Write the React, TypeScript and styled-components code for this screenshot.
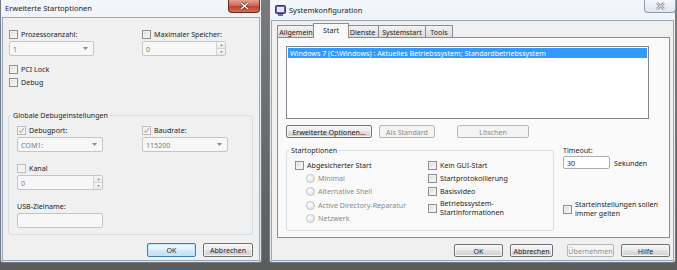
import React, { FC, ReactNode } from 'react';
import styled, { createGlobalStyle, css } from 'styled-components';

const GlobalStyle = createGlobalStyle`
  html, body {
    margin: 0;
    padding: 0;
  }
  body {
    background: #6a6a6a;
    font-family: "Noto Sans", "Open Sans", sans-serif;
    font-size: 7.1px;
    color: #1e1e1e;
  }
`

const Desktop = styled.div`
  display: flex;
  gap: 7px;
  width: 677px;
  height: 270px;
  overflow: hidden;
  background: linear-gradient(#7a7a7a, #5c5c5c);
`

const Window = styled.div<{ $width: number }>`
  flex: none;
  width: ${p => p.$width}px;
  height: 263px;
  box-sizing: border-box;
  display: flex;
  flex-direction: column;
  padding: 0 1px 1px;
  border: 1px solid #6f7b8a;
  border-top: none;
  border-radius: 0 0 3px 3px;
  background: linear-gradient(#f3f7fc, #e6edf6 60px, #dfe7f1);
`

const TitleBar = styled.div<{ $height: number }>`
  flex: none;
  height: ${p => p.$height}px;
  display: flex;
  align-items: flex-start;
  gap: 3px;
`

const TitleIcon = styled.svg`
  margin: 5px 0 0 4px;
`

const TitleText = styled.div<{ $top: number; $left?: number }>`
  flex: 1;
  margin-top: ${p => p.$top}px;
  padding-left: ${p => p.$left ?? 0}px;
  line-height: 10px;
  font-size: 7.5px;
  color: #1b1b1b;
  white-space: nowrap;
`

const CloseButton = styled.div<{ $active?: boolean }>`
  width: 32px;
  height: 13px;
  box-sizing: border-box;
  display: flex;
  align-items: center;
  justify-content: center;
  border: 1px solid #8d9aab;
  border-top: none;
  border-radius: 0 0 4px 4px;
  background: linear-gradient(#f4f7fb, #dde5ef);
  ${p => p.$active && css`
    border-color: #6a2a22;
    background: linear-gradient(#e2a093, #cf6f5f 45%, #c0432e 55%, #d2705a);
  `}
`

const Client = styled.div`
  flex: 1;
  display: flex;
  flex-direction: column;
  border: 1px solid #9aa6b4;
  background: #f0f0f0;
  min-height: 0;
`

const CheckRow = styled.label<{ $height?: number; $indent?: number }>`
  display: flex;
  align-items: center;
  gap: 3px;
  height: ${p => p.$height ?? 10}px;
  margin-left: ${p => p.$indent ?? 0}px;
  white-space: nowrap;
  color: #1e1e1e;
`

const CheckText = styled.span<{ $muted?: boolean }>`
  line-height: 9px;
  color: ${p => (p.$muted ? '#8a8a8a' : '#1e1e1e')};
`

const Box = styled.span<{ $disabled?: boolean }>`
  flex: none;
  width: 9px;
  height: 9px;
  box-sizing: border-box;
  display: flex;
  align-items: center;
  justify-content: center;
  border: 1px solid ${p => (p.$disabled ? '#bcbcbc' : '#8e8f8f')};
  background: ${p => (p.$disabled
    ? '#f4f4f4'
    : 'linear-gradient(135deg, #d6d6d6, #f4f4f4 70%, #ffffff)')};
  box-shadow: inset 0 0 0 1px ${p => (p.$disabled ? '#f6f6f6' : '#f2f2f2')};
`

const Radio = styled.span`
  flex: none;
  width: 9px;
  height: 9px;
  box-sizing: border-box;
  border-radius: 50%;
  border: 1px solid #c2c2c2;
  background: radial-gradient(circle at 35% 35%, #ffffff, #e6e6e6 70%);
`

const Field = styled.div<{ $width: number; $height?: number; $disabled?: boolean; $white?: boolean }>`
  width: ${p => p.$width}px;
  height: ${p => p.$height ?? 15}px;
  box-sizing: border-box;
  display: flex;
  align-items: center;
  padding-left: 3px;
  border: 1px solid ${p => (p.$disabled ? '#c3c6c9' : '#abadb3')};
  border-radius: 2px;
  background: ${p => (p.$white ? '#ffffff' : '#f7f7f7')};
  color: ${p => (p.$disabled ? '#7c7c7c' : '#1e1e1e')};
`

const FieldValue = styled.span`
  flex: 1;
`

const DropArrow = styled.svg`
  margin-right: 5px;
`

const SpinButtons = styled.div`
  align-self: stretch;
  width: 8px;
  display: flex;
  flex-direction: column;
  border-left: 1px solid #d4d4d4;
`

const SpinPart = styled.div`
  flex: 1;
  display: flex;
  align-items: center;
  justify-content: center;
  background: linear-gradient(#f7f7f7, #e9e9e9);
  & + & {
    border-top: 1px solid #d4d4d4;
  }
`

const Button = styled.button<{ $width: number; $height?: number; $default?: boolean; $gapLeft?: number }>`
  width: ${p => p.$width}px;
  height: ${p => p.$height ?? 14}px;
  box-sizing: border-box;
  margin-left: ${p => p.$gapLeft ?? 0}px;
  padding: 0;
  font: inherit;
  color: #1e1e1e;
  border: 1px solid #707070;
  border-radius: 2px;
  background: linear-gradient(#f4f4f4, #ececec 48%, #dedede 52%, #d2d2d2);
  box-shadow: inset 0 0 0 1px rgba(255, 255, 255, 0.75);
  white-space: nowrap;
  ${p => p.$default && css`
    border-color: #3c7fb1;
    background: linear-gradient(#f2f9fd, #e3f2fb 48%, #cfe9f8 52%, #c3e2f5);
    box-shadow: inset 0 0 0 1px #bfe8fb;
  `}
  &:disabled {
    color: #8c8c8c;
    border-color: #b5b8bb;
    background: #f4f4f4;
    box-shadow: none;
  }
`

const Group = styled.fieldset<{ $width: number }>`
  width: ${p => p.$width}px;
  box-sizing: border-box;
  margin: 0;
  border: 1px solid #d5dfe5;
  border-radius: 3px;
  min-width: 0;
`

const Legend = styled.legend<{ $shift: number }>`
  padding: 0 2px;
  margin-left: ${p => p.$shift}px;
  line-height: 10px;
  color: #1e1e1e;
`

const Plain = styled.div<{ $height?: number }>`
  height: ${p => p.$height ?? 10}px;
  line-height: ${p => p.$height ?? 10}px;
  white-space: nowrap;
`

/* ---------- small drawings ---------- */

const CheckMark: FC<{ color: string }> = ({ color }) => (
  <svg width="7" height="7" viewBox="0 0 7 7">
    <path d="M1 3.6 L2.8 5.4 L6 1.2" fill="none" stroke={color} strokeWidth="1.2" />
  </svg>
)

const Arrow: FC = () => (
  <DropArrow width="5" height="3" viewBox="0 0 5 3">
    <path d="M0 0 H5 L2.5 3 Z" fill="#8a8a8a" />
  </DropArrow>
)

const Check: FC<{ label: ReactNode; checked?: boolean; disabled?: boolean; indent?: number; height?: number }> =
  ({ label, checked, disabled, indent, height }) => (
    <CheckRow $indent={indent} $height={height}>
      <Box $disabled={disabled}>{checked && <CheckMark color={disabled ? '#b4b4b4' : '#333'} />}</Box>
      <CheckText>{label}</CheckText>
    </CheckRow>
  )

const RadioOption: FC<{ label: string }> = ({ label }) => (
  <CheckRow $indent={11} $height={13.3}>
    <Radio />
    <CheckText $muted>{label}</CheckText>
  </CheckRow>
)

const Combo: FC<{ width: number; value: string }> = ({ width, value }) => (
  <Field $width={width} $disabled>
    <FieldValue>{value}</FieldValue>
    <Arrow />
  </Field>
)

const Spin: FC<{ width: number; value: string }> = ({ width, value }) => (
  <Field $width={width} $disabled>
    <FieldValue>{value}</FieldValue>
    <SpinButtons>
      <SpinPart>
        <svg width="3" height="2" viewBox="0 0 3 2"><path d="M0 2 L1.5 0 L3 2 Z" fill="#9a9a9a" /></svg>
      </SpinPart>
      <SpinPart>
        <svg width="3" height="2" viewBox="0 0 3 2"><path d="M0 0 L1.5 2 L3 0 Z" fill="#9a9a9a" /></svg>
      </SpinPart>
    </SpinButtons>
  </Field>
)

/* ---------- left dialog ---------- */

const TopGrid = styled.div`
  display: grid;
  grid-template-columns: 133px 1fr;
  row-gap: 2px;
  padding: 11px 0 0 6px;
`

const CheckStack = styled.div`
  display: flex;
  flex-direction: column;
  gap: 3px;
  padding: 8px 0 0 6px;
`

const DebugGroup = styled(Group)`
  margin: 23px 0 0 5px;
  padding: 5px 0 6px 8px;
`

const DebugGrid = styled.div`
  display: grid;
  grid-template-columns: 125px 1fr;
  row-gap: 2px;
`

const Spacer = styled.div<{ $h: number }>`
  grid-column: 1 / -1;
  height: ${p => p.$h}px;
`

const ButtonBar = styled.div<{ $top: number; $right: number }>`
  display: flex;
  justify-content: flex-end;
  gap: 7px;
  margin-top: ${p => p.$top}px;
  padding-right: ${p => p.$right}px;
`

const StartOptionsDialog: FC = () => (
  <Window $width={262}>
    <TitleBar $height={17}>
      <TitleText $top={3} $left={3}>Erweiterte Startoptionen</TitleText>
      <CloseButton $active>
        <svg width="9" height="8" viewBox="0 0 9 8">
          <path d="M1 1 L8 7 M8 1 L1 7" stroke="#5a1a12" strokeWidth="2.6" />
          <path d="M1 1 L8 7 M8 1 L1 7" stroke="#ffffff" strokeWidth="1.6" />
        </svg>
      </CloseButton>
    </TitleBar>
    <Client>
      <TopGrid>
        <Check label="Prozessoranzahl:" />
        <Check label="Maximaler Speicher:" />
        <Combo width={85} value="1" />
        <Spin width={84} value="0" />
      </TopGrid>
      <CheckStack>
        <Check label="PCI Lock" />
        <Check label="Debug" />
      </CheckStack>
      <DebugGroup $width={245}>
        <Legend $shift={-6}>Globale Debugeinstellungen</Legend>
        <DebugGrid>
          <Check label="Debugport:" checked disabled />
          <Check label="Baudrate:" checked disabled />
          <Combo width={86} value="COM1:" />
          <Combo width={86} value="115200" />
          <Spacer $h={7} />
          <Check label="Kanal" disabled />
          <div />
          <Spin width={86} value="0" />
          <div />
          <Spacer $h={7} />
          <Plain>USB-Zielname:</Plain>
          <div />
          <Field $width={86} $disabled />
        </DebugGrid>
      </DebugGroup>
      <ButtonBar $top={8} $right={6}>
        <Button $width={49} $default>OK</Button>
        <Button $width={50}>Abbrechen</Button>
      </ButtonBar>
    </Client>
  </Window>
)

/* ---------- right dialog ---------- */

const TabStrip = styled.div`
  display: flex;
  align-items: flex-end;
  height: 14px;
  padding: 2px 0 0 5px;
`

const Tab = styled.div<{ $width: number; $selected?: boolean }>`
  width: ${p => p.$width}px;
  height: 12px;
  box-sizing: border-box;
  display: flex;
  align-items: center;
  justify-content: center;
  border: 1px solid #898c95;
  border-bottom: none;
  background: linear-gradient(#f3f3f3, #e6e6e6 50%, #dcdcdc);
  white-space: nowrap;
  & + & {
    border-left: none;
  }
  ${p => p.$selected && css`
    position: relative;
    z-index: 1;
    height: 15px;
    margin: 0 -2px -1px;
    padding-bottom: 2px;
    background: #fafafa;
    border-left: 1px solid #898c95 !important;
  `}
`

const TabPanel = styled.div`
  height: 201px;
  box-sizing: border-box;
  margin: 0 3px 0 5px;
  border: 1px solid #898c95;
  background: #fafafa;
`

const ListBox = styled.div`
  width: 363px;
  height: 73px;
  box-sizing: border-box;
  margin: 8px 0 0 8px;
  padding: 1px;
  border: 1px solid #828790;
  background: #ffffff;
`

const ListItem = styled.div<{ $selected?: boolean }>`
  height: 10px;
  line-height: 10px;
  padding-left: 2px;
  white-space: nowrap;
  ${p => p.$selected && css`
    background: #3399ff;
    color: #ffffff;
  `}
`

const PanelButtons = styled.div`
  display: flex;
  gap: 7px;
  margin: 6px 0 0 8px;
`

const LowerArea = styled.div`
  display: flex;
  align-items: flex-start;
  gap: 9px;
  margin: 7px 0 0 8px;
`

const StartGroup = styled(Group)`
  padding: 3.5px 0 5px 8px;
`

const StartGrid = styled.div`
  display: grid;
  grid-template-columns: 133px 1fr;
`

const Column = styled.div`
  display: flex;
  flex-direction: column;
`

const TimeoutLine = styled.div`
  display: flex;
  align-items: center;
  gap: 4px;
  margin-top: 1px;
`

const StickyCheck = styled.label`
  display: flex;
  align-items: center;
  gap: 3px;
  margin-top: 31px;
  line-height: 9px;
`

const SystemConfigDialog: FC = () => (
  <Window $width={407}>
    <TitleBar $height={20}>
      <TitleIcon width="11" height="11" viewBox="0 0 11 11">
        <rect x="0.5" y="0.5" width="10" height="8" rx="1" fill="#6b5fa8" stroke="#3d356e" />
        <rect x="2" y="2" width="7" height="5" fill="#dfe8ff" />
        <rect x="3" y="9" width="5" height="2" fill="#6f6f8f" />
      </TitleIcon>
      <TitleText $top={5}>Systemkonfiguration</TitleText>
      <CloseButton style={{ marginRight: -2 }}>
        <svg width="9" height="8" viewBox="0 0 9 8">
          <path d="M1 1 L8 7 M8 1 L1 7" stroke="#8a8f98" strokeWidth="2.4" />
          <path d="M1 1 L8 7 M8 1 L1 7" stroke="#eef1f5" strokeWidth="1" />
        </svg>
      </CloseButton>
    </TitleBar>
    <Client>
      <TabStrip>
        <Tab $width={38}>Allgemein</Tab>
        <Tab $width={36} $selected>Start</Tab>
        <Tab $width={32}>Dienste</Tab>
        <Tab $width={47}>Systemstart</Tab>
        <Tab $width={27}>Tools</Tab>
      </TabStrip>
      <TabPanel>
        <ListBox>
          <ListItem $selected>Windows 7 (C:\Windows) : Aktuelles Betriebssystem; Standardbetriebssystem</ListItem>
        </ListBox>
        <PanelButtons>
          <Button $width={86} $height={13}>Erweiterte Optionen...</Button>
          <Button $width={56} $height={13} disabled>Als Standard</Button>
          <Button $width={72} $height={13} disabled $gapLeft={15}>Löschen</Button>
        </PanelButtons>
        <LowerArea>
          <StartGroup $width={268}>
            <Legend $shift={-6}>Startoptionen</Legend>
            <StartGrid>
              <Column>
                <Check label="Abgesicherter Start" height={13.3} />
                <RadioOption label="Minimal" />
                <RadioOption label="Alternative Shell" />
                <RadioOption label="Active Directory-Reparatur" />
                <RadioOption label="Netzwerk" />
              </Column>
              <Column>
                <Check label="Kein GUI-Start" height={13.3} />
                <Check label="Startprotokollierung" height={13.3} />
                <Check label="Basisvideo" height={13.3} />
                <Check label={<>Betriebssystem-<br />Startinformationen</>} height={20} />
              </Column>
            </StartGrid>
          </StartGroup>
          <Column>
            <Plain>Timeout:</Plain>
            <TimeoutLine>
              <Field $width={47} $height={13} $white>30</Field>
              <span>Sekunden</span>
            </TimeoutLine>
            <StickyCheck>
              <Box />
              <span>Starteinstellungen sollen<br />immer gelten</span>
            </StickyCheck>
          </Column>
        </LowerArea>
      </TabPanel>
      <ButtonBar $top={6} $right={3}>
        <Button $width={49} $height={13}>OK</Button>
        <Button $width={43} $height={13}>Abbrechen</Button>
        <Button $width={47} $height={13} disabled $gapLeft={7}>Übernehmen</Button>
        <Button $width={49} $height={13}>Hilfe</Button>
      </ButtonBar>
    </Client>
  </Window>
)

const App: FC = () => (
  <>
    <GlobalStyle />
    <Desktop>
      <StartOptionsDialog />
      <SystemConfigDialog />
    </Desktop>
  </>
)

export default App;
